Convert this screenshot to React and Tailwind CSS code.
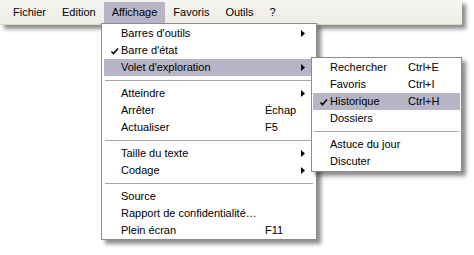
import React from "react";

const font = { fontFamily: '"Liberation Sans", Arial, sans-serif' };

function Check() {
  return (
    <svg width="8" height="8" viewBox="0 0 8 8" className="block">
      <path d="M0.5 4.5 L2.5 6.5 L7 1.5" fill="none" stroke="#000" strokeWidth="1.6" />
    </svg>
  );
}

function Arrow() {
  return (
    <svg width="4" height="7" viewBox="0 0 4 7" className="block">
      <path d="M0 0 L4 3.5 L0 7 Z" fill="#000" />
    </svg>
  );
}

function Item({ label, shortcut, checked, arrow, active, scCol }) {
  return (
    <div className={`flex items-center h-[17px] ${active ? "bg-[#b7b5c6]" : ""}`}>
      <div className="w-[17px] flex justify-end pr-[2px]">{checked ? <Check /> : null}</div>
      <div className="pl-[0px] flex-1 flex items-center">
        <span className={scCol}>{label}</span>
        {shortcut ? <span>{shortcut}</span> : null}
      </div>
      <div className="w-[13px]">{arrow ? <Arrow /> : null}</div>
    </div>
  );
}

function Sep() {
  return (
    <div className="h-[9px] flex flex-col">
      <div className="h-[4px]" />
      <div className="h-px bg-[#a6a6a6] mx-[1px]" />
    </div>
  );
}

export default function App() {
  const menus = ["Fichier", "Edition", "Affichage", "Favoris", "Outils", "?"];
  return (
    <div className="relative w-[474px] h-[255px] bg-white overflow-hidden text-[11px] text-black" style={font}>
      <div className="w-[462px] h-[25px] flex items-stretch pl-[5px] pt-[2px] bg-[linear-gradient(#f4f4f1,#eeede8)] border-b border-[#dcd6c2] shadow-[4px_4px_4px_rgba(0,0,0,0.45)]">
        {menus.map((m) => (
          <div
            key={m}
            className={`px-[8px] h-[21px] flex items-center ${m === "Affichage" ? "bg-[#b7b5c6]" : ""}`}
          >
            {m}
          </div>
        ))}
      </div>

      <div className="absolute left-[101px] top-[23px] w-[216px] bg-white border border-[#8c8c8c] px-[2px] pt-px pb-0 shadow-[4px_4px_4px_rgba(0,0,0,0.45)]">
        <Item label="Barres d'outils" arrow />
        <Item label="Barre d'état" checked />
        <Item label="Volet d'exploration" arrow active />
        <Sep />
        <Item label="Atteindre" arrow />
        <Item label="Arrêter" shortcut="Échap" scCol="w-[144px]" />
        <Item label="Actualiser" shortcut="F5" scCol="w-[144px]" />
        <Sep />
        <Item label="Taille du texte" arrow />
        <Item label="Codage" arrow />
        <Sep />
        <Item label="Source" />
        <Item label="Rapport de confidentialité…" />
        <Item label="Plein écran" shortcut="F11" scCol="w-[144px]" />
      </div>

      <div className="absolute left-[311px] top-[57px] w-[151px] bg-white border border-[#8c8c8c] px-[1px] py-px shadow-[4px_4px_4px_rgba(0,0,0,0.45)]">
        <Item label="Rechercher" shortcut="Ctrl+E" scCol="w-[78px]" />
        <Item label="Favoris" shortcut="Ctrl+I" scCol="w-[78px]" />
        <Item label="Historique" shortcut="Ctrl+H" scCol="w-[78px]" checked active />
        <Item label="Dossiers" />
        <Sep />
        <Item label="Astuce du jour" />
        <Item label="Discuter" />
      </div>
    </div>
  );
}
